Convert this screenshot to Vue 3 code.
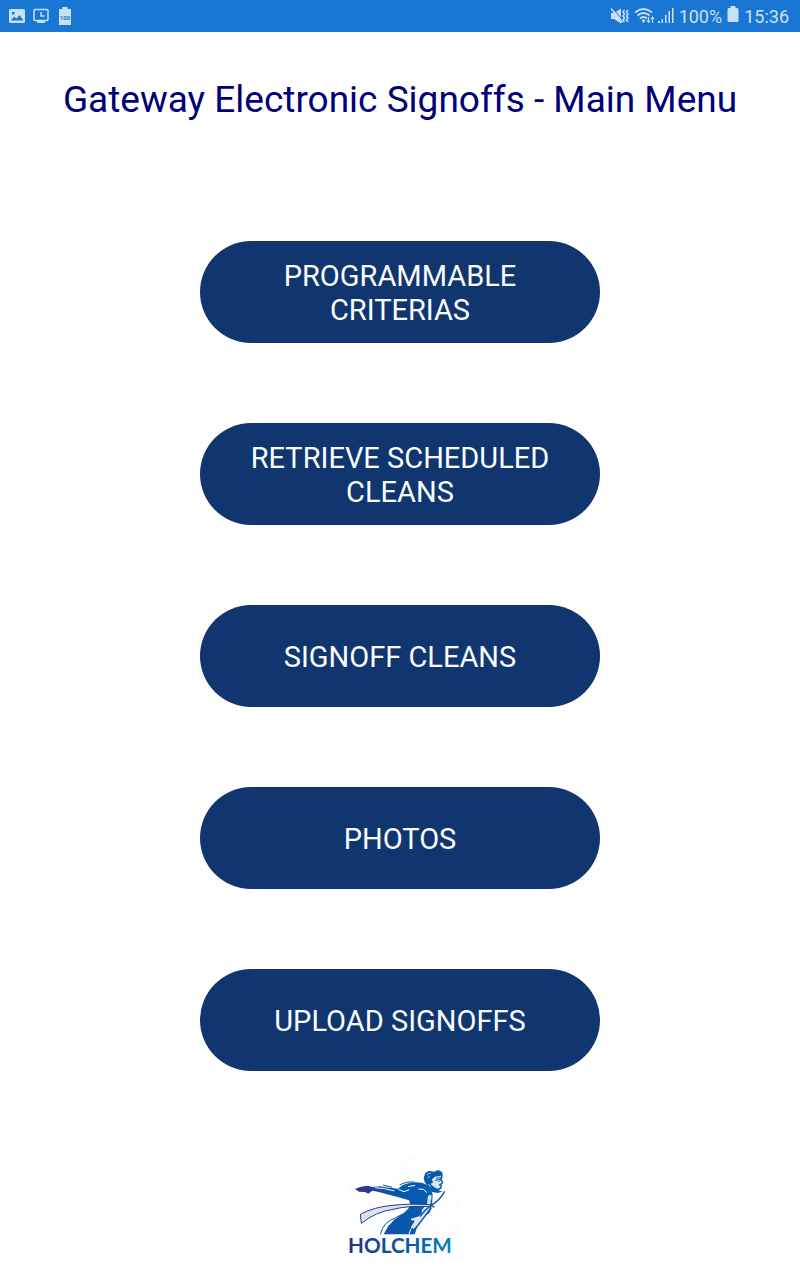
<script setup>
const actions = [
  'Programmable Criterias',
  'Retrieve Scheduled Cleans',
  'Signoff Cleans',
  'Photos',
  'Upload Signoffs'
]
</script>

<template>
  <div class="screen">
    <header class="status">
      <div class="group notices">
        <svg width="16" height="16" viewBox="0 0 16 16" aria-label="Image saved">
          <path fill="currentColor" fill-rule="evenodd" d="M1.500 1h13Q16 1 16 2.500v11q0 1.500-1.500 1.500h-13Q0 15 0 13.500v-11Q0 1 1.500 1ZM2 12.500h12.500L10.500 7l-3 3.500L5 8.500ZM3 4v2.500h2.500V4Z" />
        </svg>
        <svg width="16" height="16" viewBox="0 0 16 16" aria-label="Screen timer">
          <g fill="none" stroke="currentColor" stroke-width="1.500">
            <rect x="1" y="1.500" width="14" height="11" rx="1" />
            <path d="M8 4v4h3.500" />
            <path d="M4 14h8" stroke-width="2" />
          </g>
        </svg>
        <svg width="12" height="18" viewBox="0 0 12 18" aria-label="Battery full">
          <path fill="currentColor" d="M3.500 0h5v2H12v16H0V2h3.500Z" />
          <text class="charge" x="6" y="12.500" text-anchor="middle">100</text>
        </svg>
      </div>
      <div class="group system">
        <svg width="18" height="18" viewBox="0 0 18 18" aria-label="Vibrate">
          <path fill="currentColor" d="M0 6h3l7-4.500v15L3 12H0Z" />
          <path fill="none" stroke="#1976d2" stroke-width="1" d="M2 1.500 12 13.500" />
          <path fill="none" stroke="currentColor" stroke-width="1.500" d="M0 1.500 11.500 15.500" />
          <path fill="none" stroke="currentColor" stroke-width="1.500" d="m13.500 3-1.500 2 1.500 2L12 9l1.500 2-1.500 2 1.500 2M17 3l-1.500 2L17 7l-1.500 2 1.500 2-1.500 2 1.500 2" />
        </svg>
        <svg class="wifi" width="21" height="18" viewBox="0 0 21 18" aria-label="Wi-Fi">
          <g fill="none" stroke="currentColor" stroke-width="1.700">
            <path d="M1 5.500Q9.500-1.500 18 5.500M3.500 8.500q6-5 12 0M6 11.500q3.500-3 7 0" />
            <path d="M14.500 10v5M18.500 16v-5" stroke-width="1.200" />
          </g>
          <path fill="currentColor" d="m7.500 13.500 2-1.500 2 1.500-2 2.500ZM12.500 13.500h4l-2 3ZM16.500 12h4l-2-3Z" />
        </svg>
        <svg width="16" height="18" viewBox="0 0 16 18" aria-label="Signal">
          <path fill="currentColor" d="M0 14h2v2H0ZM3.500 12h1.500v4H3.500ZM7 8h1.500v8H7ZM10.500 4H12v12h-1.500ZM14 1h1.500v15H14Z" />
        </svg>
        <span class="percent">100%</span>
        <svg class="battery" width="12" height="20" viewBox="0 0 12 20" aria-label="Battery">
          <path fill="currentColor" d="M3.500 0h5v2H10q1.500 0 1.500 1.500v11Q11.500 16 10 16H2Q.5 16 .5 14.500v-11Q.5 2 2 2h1.500Z" />
        </svg>
        <time>15:36</time>
      </div>
    </header>

    <main>
      <h1>Gateway Electronic Signoffs - Main Menu</h1>
      <nav aria-label="Main menu">
        <button v-for="action in actions" :key="action" type="button">{{ action }}</button>
      </nav>
    </main>

    <footer>
      <svg class="logo" width="130" height="130" viewBox="0 0 390 390" aria-label="Holchem">
        <defs>
          <linearGradient id="brand" gradientUnits="userSpaceOnUse" x1="40" y1="0" x2="350" y2="0">
            <stop offset="0" stop-color="#30298c" />
            <stop offset=".3" stop-color="#17479c" />
            <stop offset=".65" stop-color="#075baa" />
            <stop offset="1" stop-color="#0787b5" />
          </linearGradient>
          <linearGradient id="figure" gradientUnits="userSpaceOnUse" x1="60" y1="0" x2="330" y2="0">
            <stop offset="0" stop-color="#382983" />
            <stop offset=".22" stop-color="#24459a" />
            <stop offset=".45" stop-color="#0757ac" />
            <stop offset="1" stop-color="#0760ae" />
          </linearGradient>
        </defs>
        <circle cx="200" cy="195" r="180" fill="#fdfdfd" />
        <path fill="url(#figure)" d="M60 117 78 110 98 107 112 111 135 109 162 113 189 116 203 105 220 100 240 97 260 98 272 103 284 113 293 132 291 167 280 189 262 212 246 233 239 253H146L160 228 177 210 205 190 219 177 226 164 222 151 191 142 156 133 128 125 112 122 100 131 90 126 72 125Z" />
        <path fill="#dce5f5" d="M279 137 289 134 290 158 283 177 265 201 246 226 237 236 225 232 238 216 226 207 252 199 261 188 260 180 276 163Z" />
        <path fill="none" stroke="#fff" stroke-width="3" d="M120 113 149 116 178 123M190 118 207 125 223 119M219 110 240 106M250 117 265 118 276 128" />
        <path fill="none" stroke="#0759a9" stroke-width="3" d="M144 105 172 112M194 105q18-11 44-9M136 253q10-38 41-47l24-13" />
        <path fill="#dde2f1" stroke="#283f89" stroke-width="3" d="M76 193Q119 170 174 166 221 160 289 164L287 170Q220 166 174 178 123 185 79 220Z" />
        <path fill="none" stroke="#08599e" stroke-width="4" d="M329 124Q315 151 288 166 267 181 255 200M289 148q-3 19 9 24M289 173l-10 19M237 211q-14 20-18 42" />
        <path fill="#075ba8" d="M269 96 266 84 271 69 282 62 296 65 310 60 322 67 323 77 321 89 325 98 320 103 320 115 310 122 324 123 309 129 291 126 273 112 275 105Z" />
        <path fill="#dce7f5" d="M291 88 300 80 318 77 317 86 308 88 316 91 321 98 315 101 310 106 317 108 314 114 306 116 292 107 287 101 294 98Z" />
        <path fill="none" stroke="#064a95" stroke-width="3" d="M304 85 318 83M312 91v5M301 91 309 89" />
        <path fill="none" stroke="#fff" stroke-width="2" d="M276 75q4-6 11-5M278 84l7-5M280 102l7 10" />
        <path fill="none" stroke="#fff" stroke-width="3" d="M229 235l-8 18" />
        <text class="wordmark" x="195" y="309" text-anchor="middle">HOLCHEM</text>
      </svg>
    </footer>
  </div>
</template>

<style>
body {
  margin: 0;
  background: #fff;
}
</style>

<style scoped>
.screen {
  display: flex;
  flex-direction: column;
  min-height: 100vh;
  font-family: Roboto, "Liberation Sans", sans-serif;
}

.status {
  display: flex;
  justify-content: space-between;
  align-items: center;
  height: 32px;
  padding: 0 11px 0 9px;
  background: #1976d2;
  color: #c9e1f8;
  font-size: 18px;
}

.group {
  display: flex;
  align-items: center;
}

.notices {
  gap: 8px;
}

.notices svg:last-child {
  margin-left: 2px;
}

.system {
  gap: 5px;
}

.wifi {
  margin-right: -2px;
}

.charge {
  fill: #1976d2;
  font-size: 6px;
  font-weight: 700;
}

main {
  flex: 1;
}

h1 {
  margin: 0;
  padding: 45px 16px 0;
  color: #000078;
  font-size: 37px;
  font-weight: 400;
  line-height: 46px;
  text-align: center;
}

nav {
  display: flex;
  flex-direction: column;
  gap: 80px;
  width: 50%;
  margin: 0 auto;
  padding-top: 118px;
}

button {
  min-height: 102px;
  padding: 2px 40px 0;
  border: 0;
  border-radius: 51px;
  background: #11356f;
  color: #f8fdff;
  font-family: inherit;
  font-size: 29px;
  line-height: 34px;
  text-transform: uppercase;
  cursor: pointer;
}

footer {
  display: flex;
  justify-content: center;
}

.logo {
  display: block;
}

.wordmark {
  fill: url(#brand);
  font-family: Lato, sans-serif;
  font-size: 62px;
  font-weight: 700;
}
</style>
